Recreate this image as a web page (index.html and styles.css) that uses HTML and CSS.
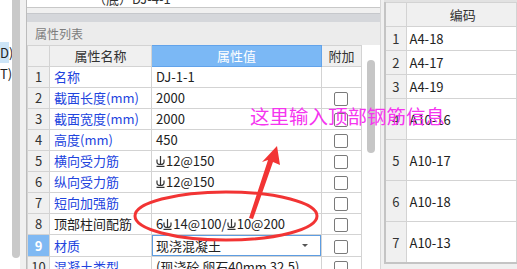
FILE: index.html
```html
<!DOCTYPE html>
<html lang="zh-CN">
<head>
    <meta charset="UTF-8">
    <title>属性列表</title>
    <link rel="stylesheet" href="styles.css">
</head>
<body>
    <div class="tree">
        <div class="tree-list">
            <div class="tree-item sel">D)</div>
            <div class="tree-item">T)</div>
        </div>
        <div class="tree-scroll"></div>
    </div>
    <div class="gap"></div>
    <div class="props">
        <div class="top-box"><span>（底）DJ-4-1</span></div>
        <div class="spacer"></div>
        <div class="strip"></div>
        <div class="title">属性列表</div>
        <div class="grid-wrap">
            <table class="grid">
                <colgroup>
                    <col class="c-num"><col class="c-name"><col class="c-val"><col class="c-add">
                </colgroup>
                <tr class="head">
                    <th></th><th>属性名称</th><th class="active">属性值</th><th>附加</th>
                </tr>
                <tr><td class="num">1</td><td class="name">名称</td><td>DJ-1-1</td><td></td></tr>
                <tr><td class="num">2</td><td class="name">截面长度(mm)</td><td>2000</td><td><span class="chk"></span></td></tr>
                <tr><td class="num">3</td><td class="name">截面宽度(mm)</td><td>2000</td><td><span class="chk"></span></td></tr>
                <tr><td class="num">4</td><td class="name">高度(mm)</td><td>450</td><td><span class="chk"></span></td></tr>
                <tr><td class="num">5</td><td class="name">横向受力筋</td><td><svg class="bar" viewBox="0 0 9 11"><path d="M4.5 0V8M1 3.5V6A3.5 2.5 0 0 0 8 6V3.5M0.5 10.4H8.5"/></svg>12@150</td><td><span class="chk"></span></td></tr>
                <tr><td class="num">6</td><td class="name">纵向受力筋</td><td><svg class="bar" viewBox="0 0 9 11"><path d="M4.5 0V8M1 3.5V6A3.5 2.5 0 0 0 8 6V3.5M0.5 10.4H8.5"/></svg>12@150</td><td><span class="chk"></span></td></tr>
                <tr><td class="num">7</td><td class="name">短向加强筋</td><td></td><td><span class="chk"></span></td></tr>
                <tr><td class="num">8</td><td class="name plain">顶部柱间配筋</td><td>6<svg class="bar" viewBox="0 0 9 11"><path d="M4.5 0V8M1 3.5V6A3.5 2.5 0 0 0 8 6V3.5M0.5 10.4H8.5"/></svg>14@100/<svg class="bar" viewBox="0 0 9 11"><path d="M4.5 0V8M1 3.5V6A3.5 2.5 0 0 0 8 6V3.5M0.5 10.4H8.5"/></svg>10@200</td><td><span class="chk"></span></td></tr>
                <tr><td class="num cur">9</td><td class="name">材质</td><td class="edit"><div class="select">现浇混凝土<span class="caret"></span></div></td><td><span class="chk"></span></td></tr>
                <tr><td class="num">10</td><td class="name">混凝土类型</td><td>(现浇砼 卵石40mm 32.5)</td><td><span class="chk"></span></td></tr>
            </table>
            <div class="vscroll"><div class="thumb"></div></div>
        </div>
    </div>
    <div class="gap2"></div>
    <div class="codes">
        <div class="codes-top"></div>
        <table class="code-grid">
            <colgroup><col class="c-num2"><col></colgroup>
            <tr class="head"><th></th><th>编码</th></tr>
            <tr class="short"><td class="num">1</td><td>A4-18</td></tr>
            <tr class="short"><td class="num">2</td><td>A4-17</td></tr>
            <tr class="short"><td class="num">3</td><td>A4-19</td></tr>
            <tr class="tall"><td class="num">4</td><td>A10-16</td></tr>
            <tr class="tall"><td class="num">5</td><td>A10-17</td></tr>
            <tr class="tall"><td class="num">6</td><td>A10-18</td></tr>
            <tr class="tall"><td class="num">7</td><td>A10-13</td></tr>
        </table>
    </div>

    <svg class="marks" viewBox="0 0 517 269">
        <ellipse cx="226" cy="216" rx="91" ry="24" fill="none" stroke="#f23434" stroke-width="3"/>
        <polygon points="277,146 262,162 268,160 249,218 253,219 273,162 280,165" fill="#f23434"/>
    </svg>
    <span class="note">这里输入顶部钢筋信息</span>
</body>
</html>
```

FILE: styles.css
```css
body {
    margin: 0;
    width: 517px;
    height: 269px;
    overflow: hidden;
    display: flex;
    position: relative;
    background: #f0f0f0;
    font-family: "Noto Sans CJK SC", "DejaVu Sans", sans-serif;
    font-size: 13px;
    color: #222;
}
.tree {
    width: 20px;
    display: flex;
    background: #fff;
}
.tree-list {
    width: 12px;
    overflow: hidden;
    padding-top: 42px;
}
.tree-item {
    height: 21px;
    line-height: 21px;
    white-space: nowrap;
    width: 9px;
}
.tree-item.sel {
    background: #cde5f7;
}
.tree-scroll {
    width: 8px;
    height: 258px;
    background: #c9c9c9;
    border-radius: 0 0 4px 4px;
}
.gap {
    width: 6px;
    background: #f0f0f0;
    border-right: 1px solid #bcbcbc;
}
.props {
    width: 354px;
    display: flex;
    flex-direction: column;
    background: #fff;
    overflow: hidden;
}
.props > div {
    flex-shrink: 0;
}
.top-box {
    height: 7px;
    border-bottom: 1px solid #c8c8c8;
    overflow: hidden;
    background: #fff;
}
.top-box span {
    display: block;
    margin: -9px 0 0 66px;
    line-height: 16px;
    color: #333;
}
.spacer {
    height: 5px;
    background: #f0f0f0;
}
.strip {
    height: 8px;
    background: #d5d7db;
    border-top: 1px solid #c6c8cc;
}
.title {
    height: 23px;
    line-height: 23px;
    padding-left: 8px;
    background: #ececec;
    color: #7c7c7c;
    font-size: 12px;
}
.grid-wrap {
    display: flex;
}
.grid {
    width: 335px;
    border-collapse: collapse;
    table-layout: fixed;
}
.c-num { width: 22px; }
.c-name { width: 102px; }
.c-val { width: 170px; }
.c-add { width: 40px; }
.grid th, .grid td {
    height: 20px;
    padding: 0 0 0 4px;
    border: 1px solid #d3d3d3;
    white-space: nowrap;
    overflow: hidden;
    font-weight: normal;
    line-height: 20px;
}
.grid th {
    background: #f0f0f0;
    text-align: center;
    padding: 0;
    color: #333;
}
.grid th.active {
    background: #7bb8f5;
    color: #fff;
    border-color: #62a3ea;
}
.grid td.num {
    background: #f0f0f0;
    text-align: center;
    padding: 0;
    color: #333;
}
.grid td.num.cur {
    background: #80b9f3;
    color: #fff;
    font-weight: bold;
}
.name {
    color: #2143de;
}
.name.plain {
    color: #222;
}
.grid td:last-child {
    text-align: center;
    padding: 0;
}
.chk {
    display: inline-block;
    width: 12px;
    height: 12px;
    border: 1px solid #7a7a7a;
    border-radius: 2px;
    vertical-align: middle;
    background: #fff;
}
.bar {
    width: 9px;
    height: 11px;
    margin-right: 1px;
    fill: none;
    stroke: #333;
    stroke-width: 1.2;
    vertical-align: -1px;
}
.grid td.edit {
    padding: 0;
}
.select {
    position: relative;
    height: 19px;
    line-height: 19px;
    border: 1px solid #5d9de2;
    padding-left: 3px;
}
.caret {
    position: absolute;
    right: 12px;
    top: 8px;
    border-left: 3px solid transparent;
    border-right: 3px solid transparent;
    border-top: 3px solid #555;
}
.vscroll {
    width: 18px;
    background: #fff;
    padding-top: 15px;
}
.thumb {
    width: 8px;
    height: 93px;
    margin-left: 5px;
    border-radius: 4px;
    background: #c6c6c6;
}
.gap2 {
    width: 3px;
    background: #f0f0f0;
    border-left: 1px solid #d8d8d8;
}
.codes {
    flex: 1;
    display: flex;
    flex-direction: column;
}
.codes-top {
    height: 2px;
    background: #e2e2e2;
}
.code-grid {
    width: 133px;
    border-collapse: collapse;
    table-layout: fixed;
    border-left: 2px solid #c4c4c4;
    border-bottom: 2px solid #c4c4c4;
    background: #fff;
}
.c-num2 { width: 21px; }
.code-grid th, .code-grid td {
    border: 1px solid #d3d3d3;
    padding: 0 0 0 3px;
    font-weight: normal;
    white-space: nowrap;
}
.code-grid th {
    height: 23px;
    background: #f0f0f0;
    color: #333;
    text-align: center;
}
.code-grid td.num {
    background: #f0f0f0;
    text-align: center;
    padding: 0;
    color: #333;
}
.code-grid tr.short td { height: 23px; }
.code-grid tr.tall td { height: 40px; }
.marks {
    position: absolute;
    left: 0;
    top: 0;
    width: 517px;
    height: 269px;
    pointer-events: none;
}
.note {
    position: absolute;
    left: 250px;
    top: 104px;
    font-size: 19.5px;
    line-height: 24px;
    color: #f535ef;
    white-space: nowrap;
}
```
